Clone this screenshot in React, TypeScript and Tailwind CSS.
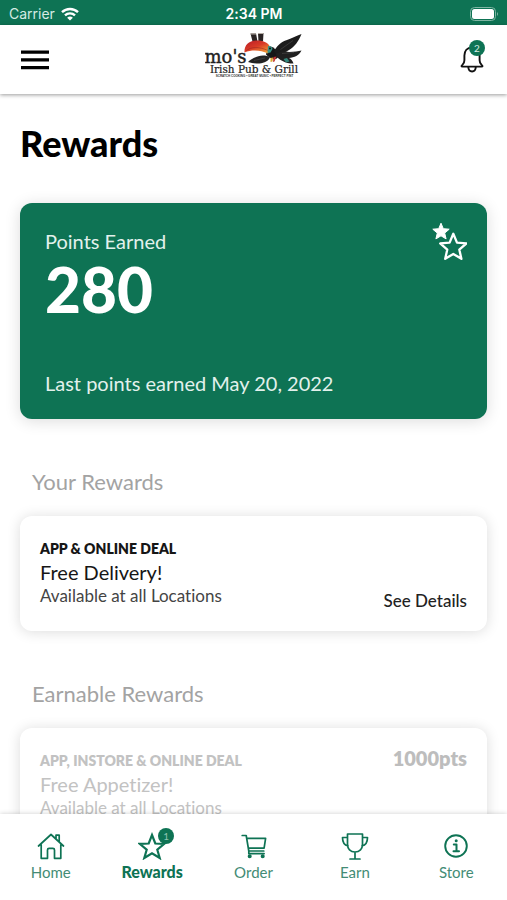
import { ReactNode } from "react";

function Logo() {
  return (
    <svg viewBox="0 0 194 92" className="w-[97px] h-[46px]" role="img" aria-label="Mo's Irish Pub & Grill">
      <defs>
        <linearGradient id="beak" x1="0" y1="0" x2="0.8" y2="1">
          <stop offset="0" stopColor="#b81c28" />
          <stop offset="0.5" stopColor="#d93a26" />
          <stop offset="1" stopColor="#f0a035" />
        </linearGradient>
      </defs>
      <path d="M91 1h11l3 16h-10zM106 0h11l-1 17h-9z" fill="#2a2424" />
      <path d="M91 1h11v2h-11zM106 0h11v2h-11z" fill="#b5aca4" />
      <path d="M126 26c8 0 14 5 18 10l7 9-9 7c-9 0-16-4-20-9z" fill="#171717" />
      <path d="M138 37c5-11 14-19 26-23 11-4 18-8 29-12-6 15-14 26-25 32-8 5-16 9-25 9z" fill="#1c1c1c" />
      <path d="M142 42c10-6 16-5 26-4 10 0 19-2 25-3-5 10-14 14-25 15 4 2 7 5 9 11-9 0-15-1-22-5-7-3-11-7-13-14z" fill="#202020" />
      <path d="M86 58c7-7 18-12 30-13 6 0 10 1 14 3-3 8-11 12-21 13-9 0-16-1-23-3z" fill="#222" />
      <path d="M79 39c-1-14 8-24 25-24 14 0 22 5 26 12l-4 14c-15-7-32-8-47-2z" fill="url(#beak)" />
      <path d="M82 36c10-9 26-9 44-1" stroke="#8f2020" strokeWidth="1" fill="none" />
      <path d="M126 26c5-1 9 2 9 6l-4 7-6 1z" fill="#379387" />
      <circle cx="130" cy="31" r="2" fill="#111" />
      <path d="M131 50l5-1-1 8-4 1z" fill="#dca82f" />
      <path d="M137 48l6-1-4 10-3 1z" fill="#c33432" />
      <path d="M157 52l7-2 5 7-7 2z" fill="#33877c" />
      <path d="M151 33l25-18M154 41l24-2M98 55l22-5" stroke="#555" strokeWidth="1" />
      <text x="-1" y="59" className="font-['DejaVu_Serif',serif] text-[36px]" fill="#222" stroke="#222" strokeWidth="0.8">mo's</text>
      <text x="98" y="79" textAnchor="middle" className="font-['DejaVu_Serif',serif] text-[21px]" fill="#222" stroke="#222" strokeWidth="0.4">Irish Pub &amp; Grill</text>
      <text x="99" y="88" textAnchor="middle" className="font-['Liberation_Sans',sans-serif] text-[6px] font-bold" fill="#333">SCRATCH COOKING • GREAT MUSIC • PERFECT PINT</text>
    </svg>
  );
}

function StatusBar() {
  return (
    <div className="h-[25px] shrink-0 bg-[#0e7354] text-white grid grid-cols-3 items-center pt-0.5 pl-[9px] pr-2 font-[Inter,sans-serif] text-sm leading-5">
      <div className="flex items-center gap-[6px]">
        <span className="text-[#d5ebe3]">Carrier</span>
        <svg viewBox="0 0 18 14" className="w-[18px] h-[14px]" fill="none" stroke="currentColor" strokeWidth="2.4">
          <path d="M1 5.2a11.5 11.5 0 0 1 16 0" />
          <path d="M4 8.4a7.2 7.2 0 0 1 10 0" />
          <path d="M9 13.6L6.1 10.8a4.2 4.2 0 0 1 5.8 0z" fill="currentColor" stroke="none" />
        </svg>
      </div>
      <span className="text-center font-semibold">2:34 PM</span>
      <svg viewBox="0 0 29 14" className="w-[29px] h-[14px] justify-self-end">
        <rect x="0.5" y="0.5" width="25" height="13" rx="4" fill="none" stroke="#7fb5a3" />
        <rect x="2" y="2" width="22" height="10" rx="2.5" fill="#fff" />
        <path d="M27 5v4q2-2 0-4z" fill="#7fb5a3" />
      </svg>
    </div>
  );
}

function Header() {
  return (
    <header className="relative z-10 h-[69px] shrink-0 bg-white px-5 grid grid-cols-3 items-center shadow-[0_1px_4px_rgba(0,0,0,0.4)]">
      <button aria-label="Menu" className="justify-self-start">
        <svg viewBox="0 0 30 20" className="w-[30px] h-5" stroke="#000" strokeWidth="3.2">
          <path d="M1 2.2h28M1 9.9h28M1 17.6h28" />
        </svg>
      </button>
      <div className="justify-self-center self-start pt-2">
        <Logo />
      </div>
      <button aria-label="Notifications" className="relative justify-self-end">
        <svg viewBox="0 0 30 32" className="w-[30px] h-8" fill="none" stroke="#111" strokeWidth="1.9" strokeLinejoin="round">
          <path d="M15 3.5c-5 0-7.600 3.600-7.600 8v4.800c0 2-.7 3.200-1.800 4.300-1.600 1.400-1.400 2 0 2h18.800c1.400 0 1.600-.6 0-2-1.100-1.100-1.800-2.300-1.800-4.300v-4.800c0-4.400-2.600-8-7.600-8z" />
          <path d="M11.300 23c.3 6 7.200 6 7.500 0" />
        </svg>
        <span className="absolute -top-1 right-[2px] size-4 rounded-full bg-[#0e7354] text-[#d5ebe3] text-[10px] leading-4 text-center">2</span>
      </button>
    </header>
  );
}

function PointsCard() {
  return (
    <section className="bg-[#0e7354] rounded-xl text-[#e2f1ec] h-[216px] pl-[25px] pr-5 pt-[18px] pb-5 flex justify-between shadow-[0_2px_16px_rgba(0,0,0,0.14)]">
      <div className="flex flex-col">
        <p className="text-xl leading-10">Points Earned</p>
        <p className="text-[62px] leading-[56px] font-black text-white">280</p>
        <p className="mt-auto text-xl leading-8">Last points earned May 20, 2022</p>
      </div>
      <svg viewBox="0 0 36 40" className="w-9 h-10" stroke="#fff" strokeLinejoin="round">
        <path d="M10 2.200l2.300 5.500 5.900.5-4.500 3.900 1.400 5.800-5.100-3.100-5.100 3.100 1.400-5.800-4.500-3.900 5.900-.5z" fill="#fff" />
        <path d="M22.300 12.800l3.700 8.800 9.400.8-7.100 6.200 2.100 9.200-8.100-4.900-8.100 4.900 2.100-9.200-7.100-6.200 9.400-.8z" fill="#0e7354" strokeWidth="2.300" />
      </svg>
    </section>
  );
}

type Reward = { kind: string; name: string; where: string; points?: string };

function RewardCard({ reward }: { reward: Reward }) {
  const locked = !!reward.points;
  return (
    <article className="bg-white rounded-xl h-[115px] px-5 py-[22px] flex justify-between shadow-[0_1px_14px_rgba(0,0,0,0.14)]">
      <div className={locked ? "text-[#c2c2c2]" : "text-[#161616]"}>
        <p className="text-sm leading-[22px] font-extrabold">{reward.kind}</p>
        <h3 className="text-xl leading-6">{reward.name}</h3>
        <p className={locked ? "text-[17px] leading-6" : "text-[17px] leading-6 text-[#444]"}>{reward.where}</p>
      </div>
      {locked ? (
        <p className="text-xl leading-4 font-extrabold text-[#bdbdbd]">{reward.points}</p>
      ) : (
        <button className="self-end text-[17px] leading-4 font-medium text-[#222]">See Details</button>
      )}
    </article>
  );
}

function NavItem({ label, active, badge, children }: { label: string; active?: boolean; badge?: string; children: ReactNode }) {
  return (
    <a href="#" className="flex-1 flex flex-col items-center pt-[18px]" aria-current={active ? "page" : undefined}>
      <span className="relative">
        <svg viewBox="0 0 28 28" className="size-7" fill="none" stroke="#0e7354" strokeWidth="1.7" strokeLinecap="round" strokeLinejoin="round">
          {children}
        </svg>
        {badge && (
          <span className="absolute -top-1 -right-2 size-4 rounded-full bg-[#0e7354] text-[#8fc4b2] text-[10px] leading-4 text-center">{badge}</span>
        )}
      </span>
      <span className={active ? "text-base leading-6 font-black text-[#0e7354]" : "text-[15px] leading-6 text-[#438c75]"}>{label}</span>
    </a>
  );
}

function BottomNav() {
  return (
    <nav className="relative z-10 h-[86px] shrink-0 bg-white flex shadow-[0_0_5px_rgba(0,0,0,0.2)]">
      <NavItem label="Home">
        <path d="M1.500 14L14 2.500 26.500 14M19 6.500V3.200h3.200v6M4.200 12.500V26.300h6.300v-8.300q0-1.600 1.600-1.600h3.800q1.600 0 1.600 1.600v8.300h6.300V12.500" />
      </NavItem>
      <NavItem label="Rewards" active badge="1">
        <path d="M14 3l3.300 8.500 9 .3-7 5.900 2.400 8.300L14 21.200 6.300 26l2.400-8.300-7-5.900 9-.3z" strokeWidth="2.200" strokeLinejoin="miter" />
      </NavItem>
      <NavItem label="Order">
        <path d="M2.200 3.500h4l2.600 15.500h15M6.800 6.300h18.800l-1.500 9.800H8.300M8.800 19v2.600h15.300" />
        <circle cx="9.700" cy="24.300" r="1.200" fill="#0e7354" />
        <circle cx="22.700" cy="24.300" r="1.200" fill="#0e7354" />
      </NavItem>
      <NavItem label="Earn">
        <path d="M6.500 2h15v10c0 5-3 8-7.500 8s-7.500-3-7.500-8zM6.500 5.500H1.500c0 4.700 1.200 7.500 5.500 8.300M21.500 5.500h5c0 4.700-1.200 7.500-5.500 8.300M14 20v7M9 27h10" />
      </NavItem>
      <NavItem label="Store">
        <circle cx="14" cy="14" r="10.800" strokeWidth="1.900" />
        <path d="M11.800 12.500h2.700v6.500M11.500 19.200h5.500" strokeWidth="2" />
        <circle cx="14.200" cy="8.700" r="1.500" fill="#0e7354" stroke="none" />
      </NavItem>
    </nav>
  );
}

export default function App() {
  return (
    <div className="h-screen flex flex-col bg-white font-[Lato,sans-serif] [font-variant-ligatures:none]">
      <StatusBar />
      <Header />
      <main className="flex-1 min-h-0 overflow-y-auto [scrollbar-width:none] px-5 pt-[27px] pb-6">
        <h1 className="text-4xl leading-[44px] font-black text-black mb-[38px]">Rewards</h1>
        <PointsCard />
        <h2 className="text-[22px] leading-8 text-[#a3a3a3] px-3 mt-[47px] mb-[18px]">Your Rewards</h2>
        <RewardCard reward={{ kind: "APP & ONLINE DEAL", name: "Free Delivery!", where: "Available at all Locations" }} />
        <h2 className="text-[22px] leading-8 text-[#a3a3a3] px-3 mt-[47px] mb-[18px]">Earnable Rewards</h2>
        <RewardCard
          reward={{ kind: "APP, INSTORE & ONLINE DEAL", name: "Free Appetizer!", where: "Available at all Locations", points: "1000pts" }}
        />
      </main>
      <BottomNav />
    </div>
  );
}
